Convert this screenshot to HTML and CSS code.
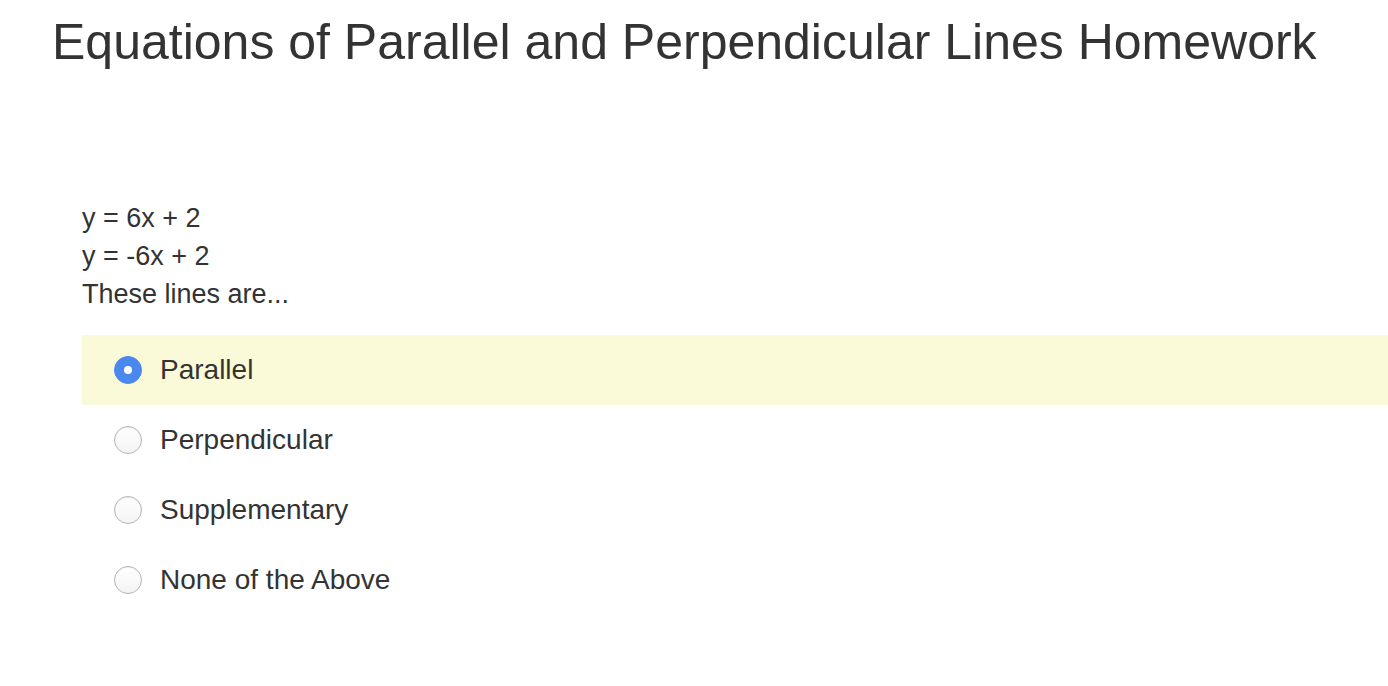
FILE: index.html
```html
<!DOCTYPE html>
<html>
<head>
<meta charset="utf-8">
<link rel="stylesheet" href="styles.css">
</head>
<body>
<h1 class="title">Equations of Parallel and Perpendicular Lines Homework</h1>
<div class="question">
  <div class="prompt">
    <div>y = 6x + 2</div>
    <div>y = -6x + 2</div>
    <div>These lines are...</div>
  </div>
  <ul class="choices">
    <li class="choice selected"><span class="radio checked"></span><span class="label">Parallel</span></li>
    <li class="choice"><span class="radio"></span><span class="label">Perpendicular</span></li>
    <li class="choice"><span class="radio"></span><span class="label">Supplementary</span></li>
    <li class="choice"><span class="radio"></span><span class="label">None of the Above</span></li>
  </ul>
</div>
</body>
</html>
```
FILE: styles.css
```css
html, body {
  margin: 0;
  padding: 0;
  background: #fff;
  overflow: hidden;
}
body {
  font-family: "Liberation Sans", Arial, sans-serif;
  color: #333;
  width: 1388px;
  height: 686px;
}
.title {
  margin: 0;
  padding: 12px 0 0 52px;
  font-size: 50px;
  font-weight: normal;
  line-height: 60px;
  color: #333;
}
.question {
  padding: 127px 0 0 82px;
}
.prompt {
  font-size: 27px;
  line-height: 38px;
  color: #333;
}
.choices {
  list-style: none;
  margin: 22px 0 0 0;
  padding: 0;
}
.choice {
  display: flex;
  align-items: center;
  height: 70px;
  padding-left: 32px;
  font-size: 28px;
  color: #333;
}
.choice.selected {
  background: #fbfad8;
}
.radio {
  width: 28px;
  height: 28px;
  border-radius: 50%;
  border: 1px solid #b4b4b4;
  background: linear-gradient(#fff, #f4f4f4);
  box-shadow: inset 0 1px 1px rgba(0, 0, 0, 0.06);
  box-sizing: border-box;
  margin-right: 18px;
  flex: none;
  position: relative;
}
.radio.checked {
  background: #4a88f0;
  border-color: #4a88f0;
  box-shadow: none;
}
.radio.checked::after {
  content: "";
  position: absolute;
  left: 50%;
  top: 50%;
  width: 8px;
  height: 8px;
  margin: -4px 0 0 -4px;
  border-radius: 50%;
  background: #fff;
}
```
